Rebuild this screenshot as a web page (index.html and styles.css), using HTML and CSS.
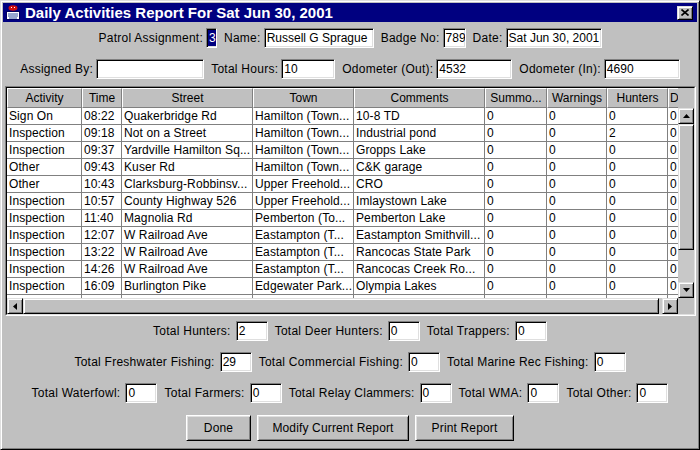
FILE: index.html
```html
<!DOCTYPE html>
<html>
<head>
<meta charset="utf-8">
<title>Daily Activities Report</title>
<link rel="stylesheet" href="styles.css">
</head>
<body>
<div class="window">
  <div class="titlebar">
    <svg class="app-icon" width="16" height="16" viewBox="0 0 16 16">
      <ellipse cx="8" cy="3" rx="4.5" ry="2.8" fill="#d01010"/>
      <rect x="6" y="2" width="1" height="1" fill="#fff"/>
      <rect x="9" y="2" width="1" height="1" fill="#fff"/>
      <rect x="1.5" y="6.5" width="13" height="8" fill="#fff" stroke="#000060"/>
      <path d="M3 9h10M3 11h10M4 13h8" stroke="#3050a0" stroke-width="1"/>
    </svg>
    <span class="title">Daily Activities Report For Sat Jun 30, 2001</span>
    <span class="close raised">
      <svg width="8" height="7" viewBox="0 0 8 7"><path d="M0.5 0.5L7.5 6.5M7.5 0.5L0.5 6.5" stroke="#000" stroke-width="1.6"/></svg>
    </span>
  </div>

  <div class="form-row row-1">
    <span class="lbl">Patrol Assignment:</span>
    <span class="field w-patrol"><span class="sel">3</span></span>
    <span class="lbl">Name:</span>
    <span class="field w-name">Russell G Sprague</span>
    <span class="lbl">Badge No:</span>
    <span class="field w-badge">789</span>
    <span class="lbl">Date:</span>
    <span class="field w-date">Sat Jun 30, 2001</span>
  </div>

  <div class="form-row row-2">
    <span class="lbl">Assigned By:</span>
    <span class="field w-assigned"></span>
    <span class="lbl">Total Hours:</span>
    <span class="field w-hours">10</span>
    <span class="lbl">Odometer (Out):</span>
    <span class="field w-odo-out">4532</span>
    <span class="lbl">Odometer (In):</span>
    <span class="field w-odo-in">4690</span>
  </div>

  <div class="table-pane">
    <div class="table-inner">
      <div class="header-view">
        <div class="hrow">
          <span class="hc c1">Activity</span>
          <span class="hc c2">Time</span>
          <span class="hc c3">Street</span>
          <span class="hc c4">Town</span>
          <span class="hc c5">Comments</span>
          <span class="hc c6">Summo...</span>
          <span class="hc c7">Warnings</span>
          <span class="hc c8">Hunters</span>
          <span class="hc c9 hc-left">D</span>
        </div>
      </div>
      <div class="corner"></div>
      <div class="body-view">
        <div class="row"><span class="c c1">Sign On</span><span class="c c2">08:22</span><span class="c c3">Quakerbridge Rd</span><span class="c c4">Hamilton (Town...</span><span class="c c5">10-8 TD</span><span class="c c6">0</span><span class="c c7">0</span><span class="c c8">0</span><span class="c c9">0</span></div>
        <div class="row"><span class="c c1">Inspection</span><span class="c c2">09:18</span><span class="c c3">Not on a Street</span><span class="c c4">Hamilton (Town...</span><span class="c c5">Industrial pond</span><span class="c c6">0</span><span class="c c7">0</span><span class="c c8">2</span><span class="c c9">0</span></div>
        <div class="row"><span class="c c1">Inspection</span><span class="c c2">09:37</span><span class="c c3">Yardville Hamilton Sq...</span><span class="c c4">Hamilton (Town...</span><span class="c c5">Gropps Lake</span><span class="c c6">0</span><span class="c c7">0</span><span class="c c8">0</span><span class="c c9">0</span></div>
        <div class="row"><span class="c c1">Other</span><span class="c c2">09:43</span><span class="c c3">Kuser Rd</span><span class="c c4">Hamilton (Town...</span><span class="c c5">C&amp;K garage</span><span class="c c6">0</span><span class="c c7">0</span><span class="c c8">0</span><span class="c c9">0</span></div>
        <div class="row"><span class="c c1">Other</span><span class="c c2">10:43</span><span class="c c3">Clarksburg-Robbinsv...</span><span class="c c4">Upper Freehold...</span><span class="c c5">CRO</span><span class="c c6">0</span><span class="c c7">0</span><span class="c c8">0</span><span class="c c9">0</span></div>
        <div class="row"><span class="c c1">Inspection</span><span class="c c2">10:57</span><span class="c c3">County Highway 526</span><span class="c c4">Upper Freehold...</span><span class="c c5">Imlaystown Lake</span><span class="c c6">0</span><span class="c c7">0</span><span class="c c8">0</span><span class="c c9">0</span></div>
        <div class="row"><span class="c c1">Inspection</span><span class="c c2">11:40</span><span class="c c3">Magnolia Rd</span><span class="c c4">Pemberton (To...</span><span class="c c5">Pemberton Lake</span><span class="c c6">0</span><span class="c c7">0</span><span class="c c8">0</span><span class="c c9">0</span></div>
        <div class="row"><span class="c c1">Inspection</span><span class="c c2">12:07</span><span class="c c3">W Railroad Ave</span><span class="c c4">Eastampton (T...</span><span class="c c5">Eastampton Smithvill...</span><span class="c c6">0</span><span class="c c7">0</span><span class="c c8">0</span><span class="c c9">0</span></div>
        <div class="row"><span class="c c1">Inspection</span><span class="c c2">13:22</span><span class="c c3">W Railroad Ave</span><span class="c c4">Eastampton (T...</span><span class="c c5">Rancocas State Park</span><span class="c c6">0</span><span class="c c7">0</span><span class="c c8">0</span><span class="c c9">0</span></div>
        <div class="row"><span class="c c1">Inspection</span><span class="c c2">14:26</span><span class="c c3">W Railroad Ave</span><span class="c c4">Eastampton (T...</span><span class="c c5">Rancocas Creek Ro...</span><span class="c c6">0</span><span class="c c7">0</span><span class="c c8">0</span><span class="c c9">0</span></div>
        <div class="row"><span class="c c1">Inspection</span><span class="c c2">16:09</span><span class="c c3">Burlington Pike</span><span class="c c4">Edgewater Park...</span><span class="c c5">Olympia Lakes</span><span class="c c6">0</span><span class="c c7">0</span><span class="c c8">0</span><span class="c c9">0</span></div>
        <div class="row"><span class="c c1"></span><span class="c c2"></span><span class="c c3"></span><span class="c c4"></span><span class="c c5"></span><span class="c c6"></span><span class="c c7"></span><span class="c c8"></span><span class="c c9"></span></div>
      </div>
      <div class="vscroll">
        <span class="sbtn raised"><svg width="7" height="4" viewBox="0 0 7 4"><polygon points="0,4 7,4 3.5,0" fill="#000"/></svg></span>
        <span class="vthumb raised"></span>
        <span class="track"></span>
        <span class="sbtn raised"><svg width="7" height="4" viewBox="0 0 7 4"><polygon points="0,0 7,0 3.5,4" fill="#000"/></svg></span>
      </div>
      <div class="hscroll">
        <span class="sbtn raised"><svg width="4" height="7" viewBox="0 0 4 7"><polygon points="4,0 4,7 0,3.5" fill="#000"/></svg></span>
        <span class="hthumb raised"></span>
        <span class="track"></span>
        <span class="sbtn raised"><svg width="4" height="7" viewBox="0 0 4 7"><polygon points="0,0 0,7 4,3.5" fill="#000"/></svg></span>
      </div>
      <div class="corner"></div>
    </div>
  </div>

  <div class="form-row totals row-a">
    <span class="lbl">Total Hunters:</span><span class="field w-num">2</span>
    <span class="lbl">Total Deer Hunters:</span><span class="field w-num">0</span>
    <span class="lbl">Total Trappers:</span><span class="field w-num">0</span>
  </div>
  <div class="form-row totals row-b">
    <span class="lbl">Total Freshwater Fishing:</span><span class="field w-num">29</span>
    <span class="lbl">Total Commercial Fishing:</span><span class="field w-num">0</span>
    <span class="lbl">Total Marine Rec Fishing:</span><span class="field w-num">0</span>
  </div>
  <div class="form-row totals row-c">
    <span class="lbl">Total Waterfowl:</span><span class="field w-num">0</span>
    <span class="lbl">Total Farmers:</span><span class="field w-num">0</span>
    <span class="lbl">Total Relay Clammers:</span><span class="field w-num">0</span>
    <span class="lbl">Total WMA:</span><span class="field w-num">0</span>
    <span class="lbl">Total Other:</span><span class="field w-num">0</span>
  </div>

  <div class="button-row">
    <span class="btn btn-done">Done</span>
    <span class="btn btn-modify">Modify Current Report</span>
    <span class="btn btn-print">Print Report</span>
  </div>
</div>
</body>
</html>
```

FILE: styles.css
```css
* { box-sizing: border-box; }

body {
  margin: 0;
  font-family: "Liberation Sans", Arial, sans-serif;
  font-size: 12px;
  color: #000;
  background: #c0c0c0;
}

.window {
  width: 700px;
  height: 450px;
  background: #c0c0c0;
  border: 1px solid;
  border-color: #dfdfdf #000 #000 #dfdfdf;
  box-shadow: inset 1px 1px #fff, inset -1px -1px #808080;
  padding: 2px;
  display: flex;
  flex-direction: column;
}

.raised {
  background: #c0c0c0;
  border: 1px solid;
  border-color: #dfdfdf #000 #000 #dfdfdf;
  box-shadow: inset 1px 1px #fff, inset -1px -1px #808080;
}

/* title bar */
.titlebar {
  height: 19px;
  background: #000080;
  color: #fff;
  display: flex;
  align-items: center;
  padding: 0 4px 0 2px;
}
.app-icon { flex: none; display: block; }
.title {
  flex: 1;
  margin-left: 4px;
  font-weight: bold;
  font-size: 15px;
  white-space: nowrap;
}
.close {
  width: 16px;
  height: 14px;
  display: flex;
  align-items: center;
  justify-content: center;
}
.close svg { display: block; }

/* form rows */
.form-row {
  display: flex;
  justify-content: center;
  align-items: center;
  height: 20px;
  flex: none;
  white-space: nowrap;
}
.row-1 { margin-top: 6px; }
.row-2 { margin-top: 11px; }
.row-a { margin-top: 5px; }
.row-b { margin-top: 11px; }
.row-c { margin-top: 11px; }

.lbl {
  margin-right: 3px;
  letter-spacing: 0.25px;
  color: #000;
}
.field + .lbl { margin-left: 7px; }
.totals .lbl { margin-right: 5px; }
.totals .field + .lbl { margin-left: 7px; }

.field {
  display: block;
  height: 20px;
  background: #fff;
  border: 1px solid;
  border-color: #808080 #fff #fff #808080;
  box-shadow: inset 1px 1px #000, inset -1px -1px #dfdfdf;
  padding-left: 2px;
  line-height: 18px;
  overflow: hidden;
  white-space: nowrap;
  flex: none;
}
.w-patrol { width: 11px; padding: 1px 0 1px 1px; }
.sel {
  display: block;
  height: 16px;
  line-height: 16px;
  background: #000080;
  color: #fff;
  padding-left: 1px;
}
.w-name { width: 110px; }
.w-badge { width: 23px; }
.w-date { width: 96px; }
.w-assigned { width: 108px; }
.w-hours { width: 54px; }
.w-odo-out { width: 76px; }
.w-odo-in { width: 76px; }
.w-num { width: 32px; }

/* table */
.table-pane {
  margin: 7px 1px 0 2px;
  height: 230px;
  flex: none;
  border: 1px solid;
  border-color: #808080 #fff #fff #808080;
}
.table-inner {
  height: 100%;
  border: 1px solid;
  border-color: #000 #dfdfdf #dfdfdf #000;
  display: grid;
  grid-template-columns: 671px 16px;
  grid-template-rows: 20px 190px 16px;
  background: #c0c0c0;
}
.header-view, .body-view { overflow: hidden; }
.body-view { background: #fff; }
.hrow, .row { display: flex; width: max-content; }
.hc {
  flex: none;
  height: 20px;
  line-height: 18px;
  text-align: center;
  background: #c0c0c0;
  border: 1px solid;
  border-color: #fff #808080 #808080 #fff;
  white-space: nowrap;
  overflow: hidden;
}
.hc-left { text-align: left; padding-left: 1px; }
.row { height: 17px; }
.c {
  flex: none;
  height: 17px;
  line-height: 16px;
  padding-left: 2px;
  letter-spacing: 0.1px;
  border-right: 1px solid #808080;
  border-bottom: 1px solid #808080;
  white-space: nowrap;
  overflow: hidden;
}
.c1 { width: 75px; }
.c2 { width: 40px; }
.c3 { width: 131px; }
.c4 { width: 101px; }
.c5 { width: 131px; }
.c6 { width: 62px; }
.c7 { width: 60px; }
.c8 { width: 61px; }
.c9 { width: 60px; }

.corner { background: #c0c0c0; }

.vscroll { display: flex; flex-direction: column; background: #c8c8c8; }
.hscroll { display: flex; background: #c8c8c8; }
.sbtn {
  flex: none;
  width: 16px;
  height: 16px;
  display: flex;
  align-items: center;
  justify-content: center;
}
.sbtn svg { display: block; }
.vthumb { flex: none; width: 16px; height: 126px; }
.hthumb { flex: none; height: 16px; width: 636px; }
.track { flex: 1; }

/* buttons */
.button-row {
  display: flex;
  justify-content: center;
  gap: 6px;
  margin-top: 12px;
  flex: none;
}
.btn {
  height: 26px;
  display: flex;
  align-items: center;
  justify-content: center;
  letter-spacing: 0.15px;
  background: #c0c0c0;
  border: 1px solid;
  border-color: #fff #000 #000 #fff;
  box-shadow: inset 1px 1px #dfdfdf, inset -1px -1px #808080;
}
.btn-done { width: 65px; }
.btn-modify { width: 152px; }
.btn-print { width: 99px; }
```
